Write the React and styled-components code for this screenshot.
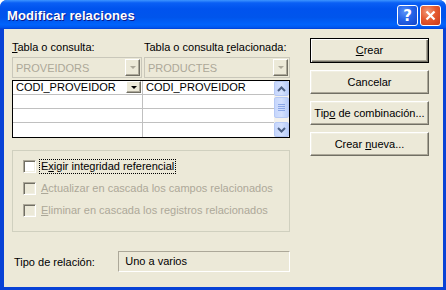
import styled, { createGlobalStyle } from 'styled-components';

const GlobalStyle = createGlobalStyle`
  html, body {
    margin: 0;
    padding: 0;
    background: #fff;
  }

  body {
    font-family: "Liberation Sans", Arial, sans-serif;
    font-size: 11px;
    color: #000;
  }
`;

const Window = styled.div`
  width: 446px;
  height: 290px;
  box-sizing: border-box;
  display: flex;
  flex-direction: column;
  background: #0842d6;
  border-radius: 7px 7px 0 0;
  overflow: hidden;
  padding: 0 3px 3px 4px;
`;

const TitleBar = styled.div`
  height: 29px;
  margin: 0 -3px 0 -4px;
  padding: 0 5px 0 7px;
  display: flex;
  align-items: center;
  justify-content: space-between;
  background: linear-gradient(
    180deg,
    #3d95ff 0,
    #0a5ff5 10%,
    #0053ee 30%,
    #0055ec 60%,
    #0063fc 85%,
    #0058f0 94%,
    #0040d8 100%
  );
`;

const Title = styled.div`
  color: #fff;
  font-weight: bold;
  font-size: 13px;
  text-shadow: 1px 1px 0 #0c1a8a;
  letter-spacing: 0.1px;
  padding-top: 1px;
`;

const Controls = styled.div`
  display: flex;
  gap: 2px;
  padding-top: 2px;
`;

const CaptionButton = styled.div`
  width: 21px;
  height: 21px;
  box-sizing: border-box;
  border: 1px solid #fff;
  border-radius: 3px;
  display: flex;
  align-items: center;
  justify-content: center;
  color: #fff;
  font-weight: bold;
  font-size: 15px;
  font-family: "DejaVu Sans", sans-serif;
  background: ${(p) =>
    p.$close
      ? 'radial-gradient(circle at 35% 30%, #f19a7b 0, #e55a2f 45%, #c8391a 100%)'
      : 'radial-gradient(circle at 35% 30%, #5a92f8 0, #2463e8 45%, #1344c8 100%)'};
`;

const Body = styled.div`
  flex: 1;
  background: #ece9d8;
  display: flex;
  gap: 20px;
  padding: 9px 0 0 8px;
`;

const LeftColumn = styled.div`
  width: 278px;
  padding-top: 3px;
  display: flex;
  flex-direction: column;
`;

const LabelRow = styled.div`
  display: grid;
  grid-template-columns: 132px 146px;
  height: 13px;
  line-height: 13px;
  white-space: nowrap;
`;

const ComboRow = styled.div`
  display: grid;
  grid-template-columns: 130px 146px;
  gap: 2px;
  margin-top: 3px;
`;

const Combo = styled.div`
  height: 21px;
  box-sizing: border-box;
  border: 1px solid #c9c7ba;
  display: flex;
  align-items: center;
  justify-content: space-between;
  padding: 0 1px 0 3px;
  color: #aca899;
`;

const ArrowButton = styled.div`
  width: ${(p) => (p.$small ? 15 : 15)}px;
  height: ${(p) => (p.$small ? 12 : 17)}px;
  box-sizing: border-box;
  background: #ece9d8;
  border: 1px solid;
  border-color: #fff #716f64 #716f64 #fff;
  box-shadow: inset -1px -1px 0 #aca899;
  display: flex;
  align-items: center;
  justify-content: center;

  &::after {
    content: '';
    border-left: 3px solid transparent;
    border-right: 3px solid transparent;
    border-top: 3px solid ${(p) => (p.$disabled ? '#aca899' : '#000')};
  }
`;

const Table = styled.div`
  margin-top: 2px;
  border: 1px solid #000;
  background: #fff;
  display: grid;
  grid-template-columns: 130px 131px 15px;
  grid-template-rows: repeat(4, 14px);
`;

const Cell = styled.div`
  box-sizing: border-box;
  border-bottom: ${(p) => (p.$last ? 'none' : '1px solid #c0c0c0')};
  border-right: ${(p) => (p.$first ? '1px solid #c0c0c0' : 'none')};
  display: flex;
  align-items: center;
  justify-content: space-between;
  padding: 0 1px 1px 3px;
  line-height: 13px;
  white-space: nowrap;
`;

const ScrollBar = styled.div`
  grid-column: 3;
  grid-row: 1 / -1;
  background: #f3f1ec;
  display: flex;
  flex-direction: column;
`;

const ScrollButton = styled.div`
  height: ${(p) => p.$h}px;
  box-sizing: border-box;
  margin: 0 0 ${(p) => p.$mb || 0}px;
  border: 1px solid #b6c9f5;
  border-radius: 2px;
  background: linear-gradient(90deg, #c6d6fc 0, #d3e0fd 50%, #b9cdf9 100%);
  display: flex;
  align-items: center;
  justify-content: center;
`;

const Spacer = styled.div`
  flex: 1;
`;

const GroupBox = styled.div`
  margin-top: 12px;
  height: 82px;
  box-sizing: border-box;
  border: 1px solid #d0d0bf;
  padding: 4px 10px 0;
  display: flex;
  flex-direction: column;
`;

const CheckRow = styled.div`
  height: 22px;
  display: flex;
  align-items: center;
  gap: 5px;
  color: ${(p) => (p.$disabled ? '#aca899' : '#000')};
  white-space: nowrap;
`;

const CheckBox = styled.div`
  width: 13px;
  height: 13px;
  box-sizing: border-box;
  border: 1px solid;
  border-color: #aca899 #fff #fff #aca899;
  box-shadow: inset 1px 1px 0 #716f64, inset -1px -1px 0 #f1efe2;
  background: ${(p) => (p.$disabled ? '#ece9d8' : '#fff')};
`;

const CheckLabel = styled.span`
  line-height: 13px;
  padding: 0 1px;
  margin-left: -1px;
  outline: ${(p) => (p.$focus ? '1px dotted #000' : 'none')};
`;

const RelationRow = styled.div`
  margin-top: 19px;
  display: flex;
  align-items: center;
  padding-left: 2px;
`;

const RelationLabel = styled.div`
  width: 105px;
`;

const RelationBox = styled.div`
  width: 173px;
  height: 21px;
  box-sizing: border-box;
  border: 1px solid;
  border-color: #aca899 #fff #fff #aca899;
  display: flex;
  align-items: center;
  padding: 0 0 1px 6px;
`;

const RightColumn = styled.div`
  width: 119px;
  display: flex;
  flex-direction: column;
  gap: 7px;
`;

const Button = styled.div`
  height: ${(p) => (p.$default ? 25 : 24)}px;
  box-sizing: border-box;
  border: 1px solid;
  border-color: ${(p) => (p.$default ? '#000' : '#fff #716f64 #716f64 #fff')};
  box-shadow: ${(p) =>
    p.$default
      ? 'inset 1px 1px 0 #fff, inset -1px -1px 0 #716f64, inset -2px -2px 0 #aca899'
      : 'inset -1px -1px 0 #aca899, inset 1px 1px 0 #f1efe2'};
  display: flex;
  align-items: center;
  justify-content: center;
  white-space: nowrap;
  overflow: hidden;
  padding: 0 2px 1px;
`;

const Key = styled.span`
  text-decoration: underline;
  text-underline-offset: 1px;
`;

function Arrow({ up }) {
  return (
    <svg width="9" height="6" viewBox="0 0 9 6">
      <polyline
        points={up ? '1,5 4.5,1.5 8,5' : '1,1 4.5,4.5 8,1'}
        fill="none"
        stroke="#4d6185"
        strokeWidth="2"
      />
    </svg>
  );
}

function Grip() {
  return (
    <svg width="7" height="8" viewBox="0 0 7 8">
      {[0.5, 2.5, 4.5, 6.5].map((y) => (
        <line key={y} x1="0" x2="7" y1={y} y2={y} stroke="#8aa6e6" strokeWidth="1" />
      ))}
    </svg>
  );
}

export default function App() {
  return (
    <>
      <GlobalStyle />
      <Window>
        <TitleBar>
          <Title>Modificar relaciones</Title>
          <Controls>
            <CaptionButton>?</CaptionButton>
            <CaptionButton $close>
              <svg width="11" height="11" viewBox="0 0 11 11">
                <path d="M1.5 1.5 L9.5 9.5 M9.5 1.5 L1.5 9.5" stroke="#fff" strokeWidth="2.2" />
              </svg>
            </CaptionButton>
          </Controls>
        </TitleBar>
        <Body>
          <LeftColumn>
            <LabelRow>
              <span>
                <Key>T</Key>abla o consulta:
              </span>
              <span>
                Tabla o consulta <Key>r</Key>elacionada:
              </span>
            </LabelRow>
            <ComboRow>
              <Combo>
                PROVEIDORS
                <ArrowButton $disabled />
              </Combo>
              <Combo>
                PRODUCTES
                <ArrowButton $disabled />
              </Combo>
            </ComboRow>
            <Table>
              <Cell $first>
                CODI_PROVEIDOR
                <ArrowButton $small />
              </Cell>
              <Cell>CODI_PROVEIDOR</Cell>
              <ScrollBar>
                <ScrollButton $h={15} $mb={1}>
                  <Arrow up />
                </ScrollButton>
                <ScrollButton $h={21}>
                  <Grip />
                </ScrollButton>
                <Spacer />
                <ScrollButton $h={15}>
                  <Arrow />
                </ScrollButton>
              </ScrollBar>
              <Cell $first />
              <Cell />
              <Cell $first />
              <Cell />
              <Cell $first $last />
              <Cell $last />
            </Table>
            <GroupBox>
              <CheckRow>
                <CheckBox />
                <CheckLabel $focus>
                  E<Key>x</Key>igir integridad referencial
                </CheckLabel>
              </CheckRow>
              <CheckRow $disabled>
                <CheckBox $disabled />
                <CheckLabel>
                  <Key>A</Key>ctualizar en cascada los campos relacionados
                </CheckLabel>
              </CheckRow>
              <CheckRow $disabled>
                <CheckBox $disabled />
                <CheckLabel>
                  <Key>E</Key>liminar en cascada los registros relacionados
                </CheckLabel>
              </CheckRow>
            </GroupBox>
            <RelationRow>
              <RelationLabel>Tipo de relación:</RelationLabel>
              <RelationBox>Uno a varios</RelationBox>
            </RelationRow>
          </LeftColumn>
          <RightColumn>
            <Button $default>
              <span>
                <Key>C</Key>rear
              </span>
            </Button>
            <Button>Cancelar</Button>
            <Button>
              <span>
                Tip<Key>o</Key> de combinación...
              </span>
            </Button>
            <Button>
              <span>
                Crear <Key>n</Key>ueva...
              </span>
            </Button>
          </RightColumn>
        </Body>
      </Window>
    </>
  );
}
